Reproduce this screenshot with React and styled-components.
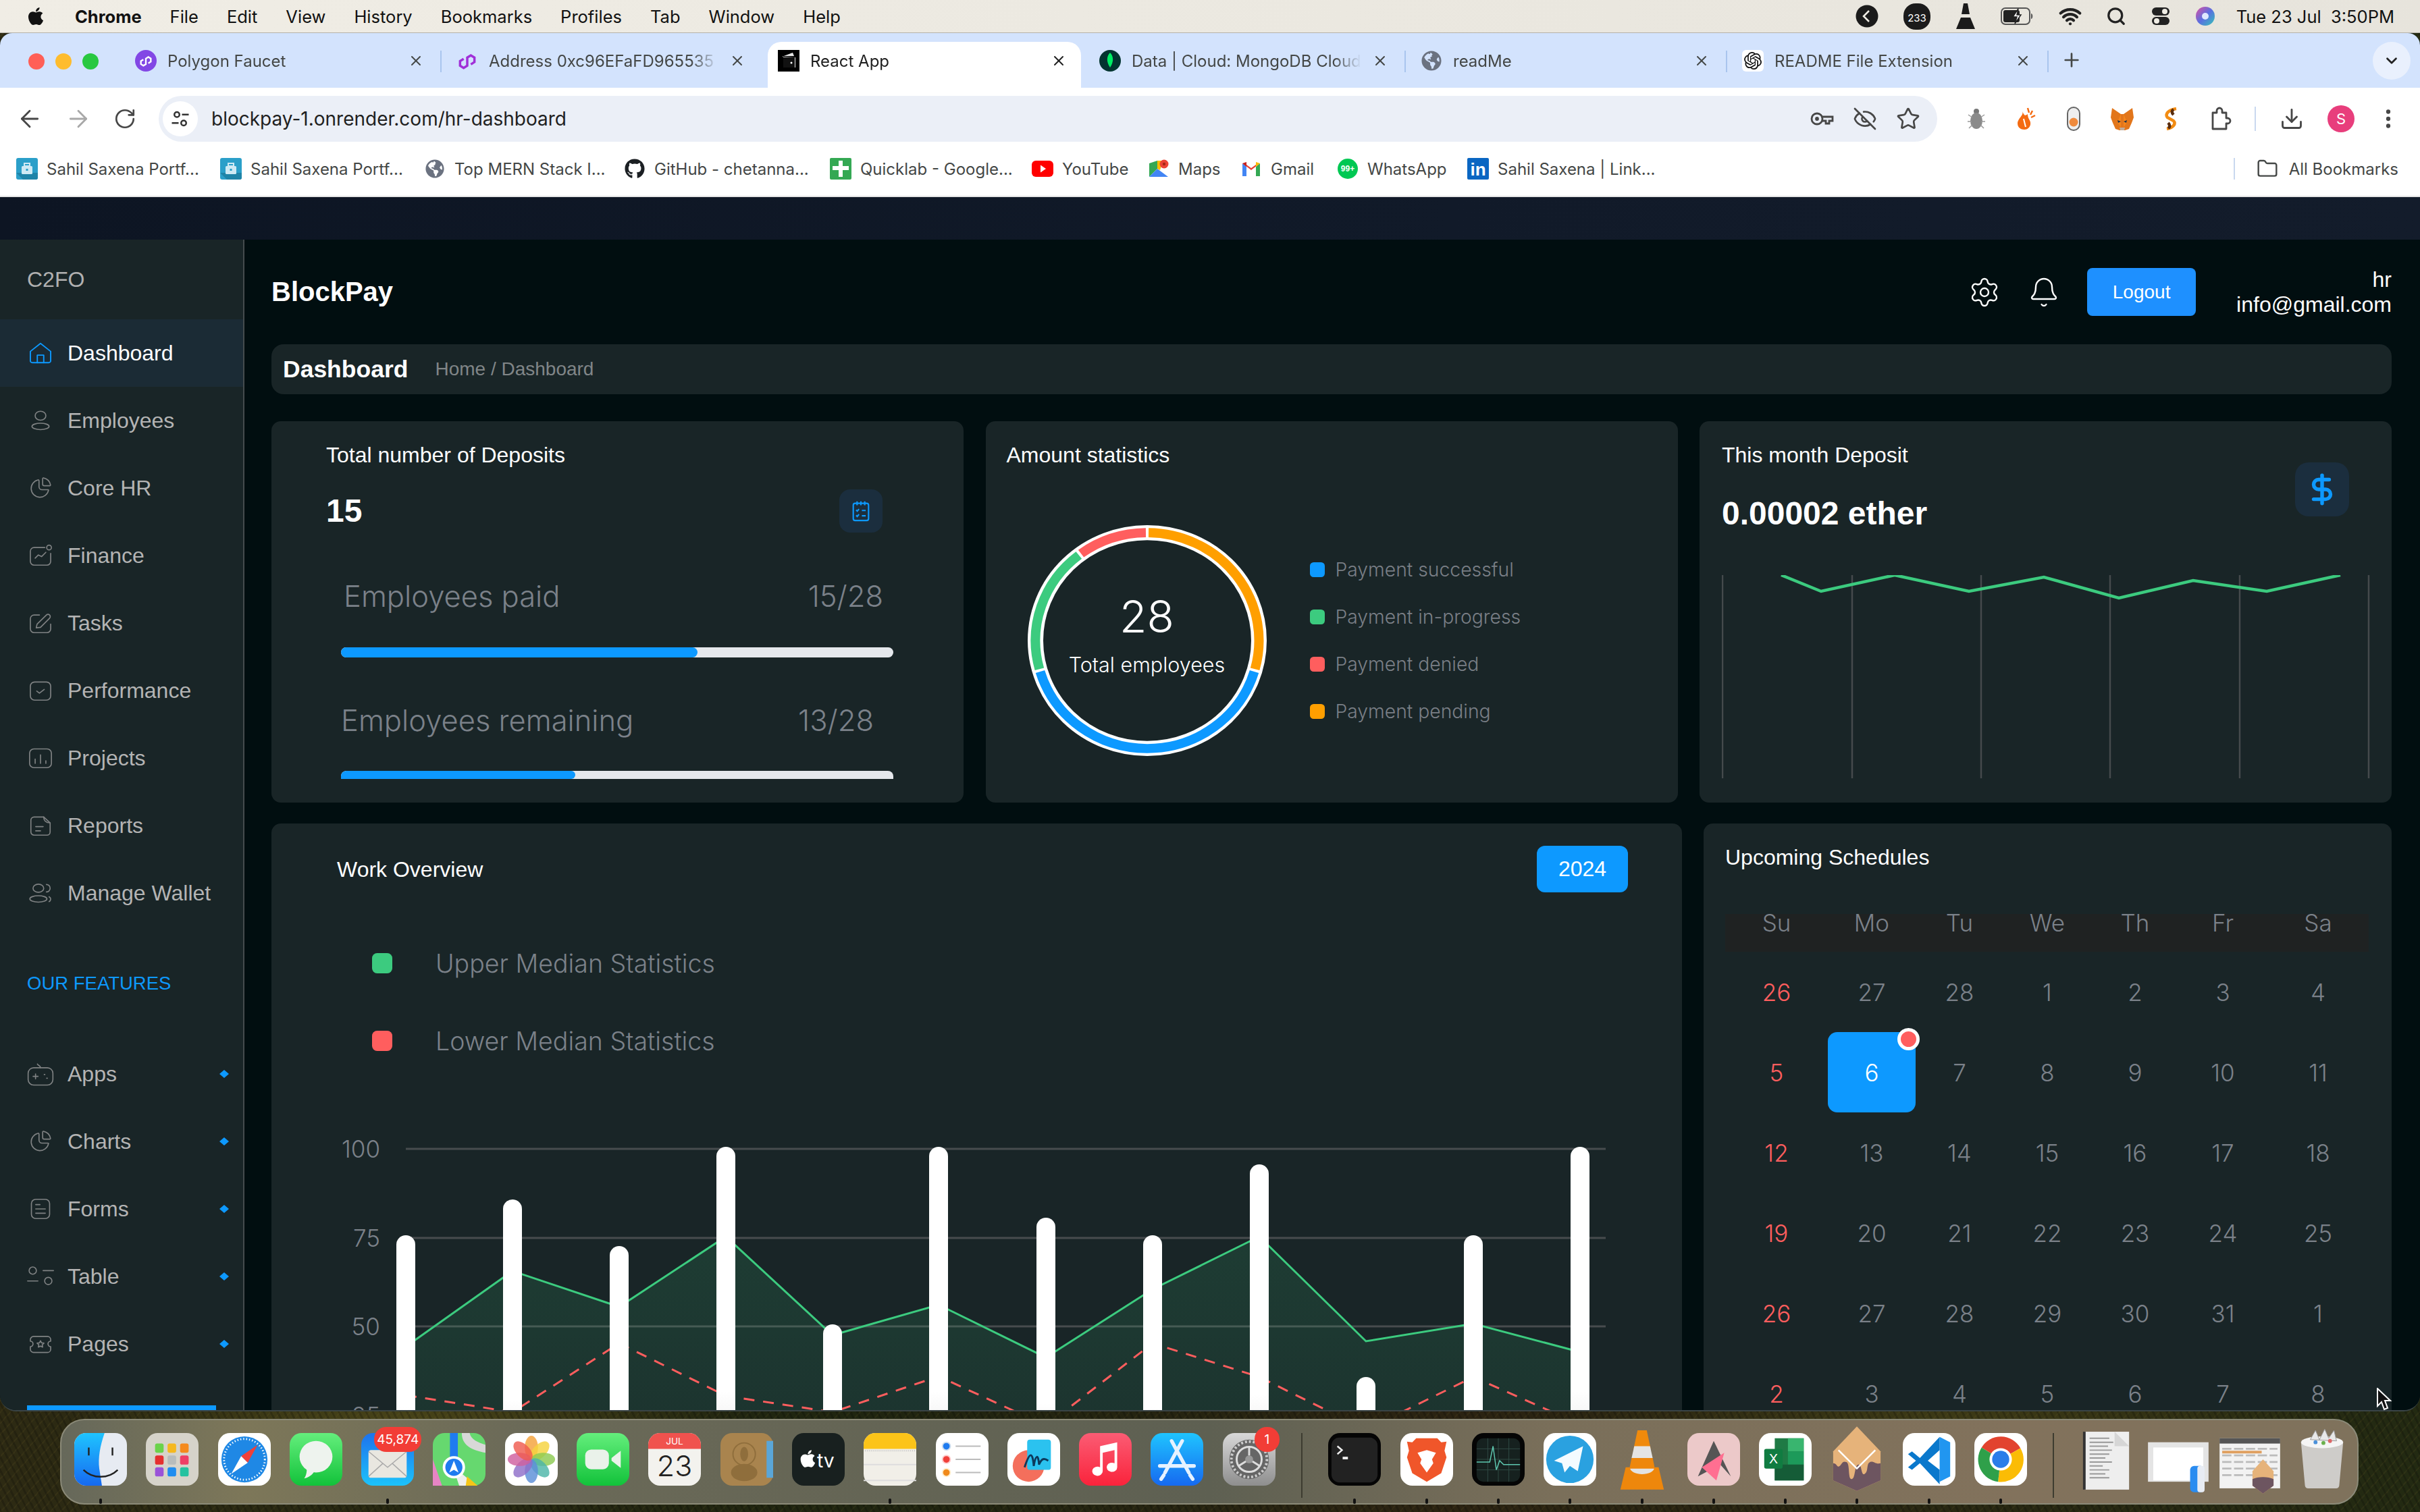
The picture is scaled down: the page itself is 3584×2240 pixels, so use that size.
import React from 'react';
import styled, { createGlobalStyle } from 'styled-components';
import { FaApple, FaGithub, FaGlobeAmericas } from 'react-icons/fa';
import { SiOpenai } from 'react-icons/si';
import {
  ArrowLeft, ArrowRight, RotateCw, X, Plus, ChevronDown, EyeOff, Star,
  Download, EllipsisVertical, Folder, Settings, Bell, DollarSign, Search, Wifi,
} from 'lucide-react';

const SANS = '"Liberation Sans", Arial, sans-serif';
const UI = '"Inter", "Liberation Sans", sans-serif';
const SOFT = '"Inter", "Liberation Sans", sans-serif';
const BLUE = '#0d99ff';
const GREEN = '#3ccb7f';
const RED = '#ff5e5e';
const ORANGE = '#ff9f00';
const CARD = '#192527';
const MUTED = '#7b8189';

const GlobalStyle = createGlobalStyle`
  html, body { margin: 0; padding: 0; background: #26250f; }
  * { box-sizing: border-box; }
`;

const Screen = styled.div`
  position: relative;
  width: 3584px;
  height: 2240px;
  overflow: hidden;
  font-family: ${SANS};
  background:
    repeating-linear-gradient(63deg, rgba(0, 0, 0, 0.18) 0 3px, transparent 3px 9px),
    repeating-linear-gradient(-48deg, rgba(120, 100, 40, 0.12) 0 2px, transparent 2px 11px),
    radial-gradient(ellipse 500px 120px at 600px 2110px, #4a4519 0%, transparent 100%),
    radial-gradient(ellipse 600px 140px at 2900px 2100px, #3d3a16 0%, transparent 100%),
    linear-gradient(90deg, #2d2a13 0%, #1f2510 35%, #2b2312 60%, #232a12 100%);
`;

/* menu bar */
const MenuBar = styled.div`
  height: 49px;
  display: flex;
  align-items: center;
  padding-left: 38px;
  background: linear-gradient(90deg, #f0ede5, #e7e4dc);
  border-bottom: 1px solid #b5b2aa;
  font-family: ${UI};
  font-size: 25.5px;
  color: #111;
`;
const MenuItems = styled.div`
  display: flex;
  align-items: center;
  gap: 42px;
  margin-left: 43px;
`;
const MenuApp = styled.span`
  font-weight: 700;
`;
const StatusIcons = styled.div`
  margin-left: auto;
  display: flex;
  align-items: center;
  gap: 36px;
  padding-right: 38px;
`;
const Clock = styled.span`
  margin-left: -5px;
  white-space: nowrap;
`;

/* browser */
const Win = styled.div`
  height: 2042px;
  display: flex;
  flex-direction: column;
  overflow: hidden;
  border-radius: 18px 18px 24px 24px;
  background: #010e10;
  border-bottom: 2px solid #3a4446;
`;
const TabStrip = styled.div`
  height: 81px;
  flex: none;
  display: flex;
  padding-top: 13px;
  background: #d3e3fd;
  font-family: ${UI};
  font-size: 24px;
  color: #444746;
`;
const Lights = styled.div`
  width: 178px;
  flex: none;
  display: flex;
  gap: 16px;
  padding: 17px 0 0 42px;
`;
const Light = styled.i`
  width: 24px;
  height: 24px;
  border-radius: 50%;
  background: ${(p) => p.$c};
`;
const Tab = styled.div`
  position: relative;
  width: 474px;
  height: 68px;
  flex: none;
  display: flex;
  align-items: center;
  gap: 16px;
  padding: 0 24px 12px 22px;
  color: ${(p) => (p.$active ? '#1f1f1f' : '#444746')};
  &::before {
    content: '';
    position: absolute;
    inset: 0 3px 0 7px;
    background: ${(p) => (p.$active ? '#fff' : 'transparent')};
    border-radius: 20px 20px 0 0;
  }
  & > * { position: relative; }
`;
const TabTitle = styled.span`
  flex: 1;
  overflow: hidden;
  white-space: nowrap;
  -webkit-mask-image: linear-gradient(90deg, #000 88%, transparent);
`;
const Fav = styled.span`
  flex: none;
  width: 32px;
  height: 32px;
  display: flex;
  align-items: center;
  justify-content: center;
  border-radius: ${(p) => p.$r || 0};
  background: ${(p) => p.$bg || 'transparent'};
  color: ${(p) => p.$c || '#fff'};
`;
const TabSep = styled.i`
  flex: none;
  width: 2px;
  height: 32px;
  margin-top: 13px;
  background: ${(p) => (p.$off ? 'transparent' : '#a9c5ee')};
`;
const NewTab = styled.div`
  margin: 11px 0 0 18px;
  height: 32px;
  display: flex;
`;
const TabMenu = styled.div`
  margin-left: auto;
  margin-right: 14px;
  width: 56px;
  height: 56px;
  border-radius: 50%;
  background: #e9f0fd;
  display: flex;
  align-items: center;
  justify-content: center;
`;
const Toolbar = styled.div`
  height: 82px;
  flex: none;
  display: flex;
  align-items: flex-start;
  padding: 12px 0 0 24px;
  background: #fff;
  color: #474747;
`;
const NavBtns = styled.div`
  display: flex;
  gap: 32px;
  height: 68px;
  align-items: center;
`;
const Address = styled.div`
  width: 2634px;
  height: 68px;
  margin-left: 33px;
  display: flex;
  align-items: center;
  padding: 0 25px 0 6px;
  border-radius: 34px;
  background: #ebeff7;
`;
const SiteChip = styled.span`
  width: 52px;
  height: 52px;
  border-radius: 50%;
  background: #fff;
  display: flex;
  align-items: center;
  justify-content: center;
`;
const Url = styled.span`
  margin-left: 20px;
  font-family: ${UI};
  font-size: 28px;
  color: #1f1f1f;
`;
const AddrActions = styled.div`
  margin-left: auto;
  display: flex;
  gap: 28px;
`;
const Exts = styled.div`
  display: flex;
  align-items: center;
  height: 68px;
  margin-left: 40px;
  gap: 36px;
`;
const ToolSep = styled.i`
  width: 2px;
  height: 36px;
  background: #c9d8ef;
  margin-left: ${(p) => p.$ml || 0}px;
`;
const ToolEnd = styled.div`
  display: flex;
  align-items: center;
  height: 68px;
  margin-left: ${(p) => p.$ml}px;
`;
const Avatar = styled.span`
  width: 40px;
  height: 40px;
  border-radius: 50%;
  background: #e83e7c;
  color: #fff;
  font-family: ${UI};
  font-size: 22px;
  display: flex;
  align-items: center;
  justify-content: center;
`;
const Bookmarks = styled.div`
  height: 80px;
  flex: none;
  display: flex;
  align-items: center;
  padding: 0 32px 2px 24px;
  background: #fff;
  border-bottom: 2px solid #e6e6e6;
  font-family: ${UI};
  font-size: 24px;
  color: #444746;
`;
const Mark = styled.div`
  width: ${(p) => p.$w}px;
  flex: none;
  display: flex;
  align-items: center;
  gap: 13px;
  white-space: nowrap;
`;
const AllMarks = styled.div`
  margin-left: auto;
  display: flex;
  align-items: center;
  gap: 16px;
`;
const MarkSep = styled.i`
  width: 2px;
  height: 32px;
  background: #c9d8ef;
  margin-right: 16px;
`;

/* app */
const Band = styled.div`
  height: 63px;
  flex: none;
  background: linear-gradient(90deg, #0d1523, #111a29 60%, #131c2b);
`;
const Dash = styled.div`
  flex: 1;
  min-height: 0;
  display: flex;
`;
const Sidebar = styled.aside`
  width: 362px;
  flex: none;
  background: ${CARD};
  border-right: 2px solid #454c4e;
  overflow: hidden;
`;
const Brand = styled.div`
  height: 118px;
  padding: 0 0 0 40px;
  display: flex;
  align-items: center;
  font-size: 32px;
  color: #b0b0b0;
`;
const NavRow = styled.div`
  position: relative;
  height: 100px;
  display: flex;
  align-items: center;
  gap: 24px;
  padding: 0 21px 0 44px;
  font-size: 32px;
  color: ${(p) => (p.$active ? '#fff' : '#b4b4b4')};
  background: ${(p) => (p.$active ? '#1b2b35' : 'transparent')};
`;
const NavIcon = styled.span`
  flex: 0 0 32px;
  min-width: 0;
  width: 32px;
  height: 32px;
  display: flex;
  align-items: center;
  justify-content: center;
  color: ${(p) => (p.$active ? BLUE : '#7f8283')};
`;
const Diamond = styled.i`
  margin-left: auto;
  width: 14px;
  height: 12px;
  background: ${BLUE};
  clip-path: polygon(50% 0, 100% 50%, 50% 100%, 0 50%);
`;
const SideLabel = styled.div`
  height: 168px;
  padding-left: 40px;
  display: flex;
  align-items: center;
  font-size: 27.5px;
  color: ${BLUE};
`;
const SideBar2 = styled.div`
  margin: 41px 0 0 40px;
  width: 280px;
  height: 40px;
  background: ${BLUE};
`;
const Main = styled.main`
  flex: 1;
  min-width: 0;
  padding: 0 42px 0 40px;
  background: #010e10;
  overflow: hidden;
`;
const Header = styled.header`
  height: 155px;
  display: flex;
  align-items: center;
  color: #fff;
`;
const Logo = styled.div`
  font-size: 40px;
  font-weight: 700;
`;
const HeadActions = styled.div`
  margin-left: auto;
  display: flex;
  align-items: center;
  gap: 40px;
`;
const LogoutBtn = styled.button`
  width: 161px;
  height: 71px;
  border: 0;
  border-radius: 8px;
  background: #1e90ff;
  color: #fff;
  font-family: ${SANS};
  font-size: 28px;
`;
const UserBox = styled.div`
  margin-left: 60px;
  text-align: right;
  font-size: 32px;
  line-height: 37px;
`;
const TitleBar = styled.div`
  height: 74px;
  display: flex;
  align-items: center;
  gap: 40px;
  padding-left: 17px;
  border-radius: 18px;
  background: ${CARD};
`;
const PageTitle = styled.h1`
  margin: 0;
  font-size: 35.5px;
  color: #fff;
`;
const Crumb = styled.span`
  font-size: 28px;
  color: #808587;
`;
const TopRow = styled.div`
  margin-top: 40px;
  height: 565px;
  display: grid;
  grid-template-columns: 1025px 1025px 1025px;
  column-gap: 32.5px;
`;
const BottomRow = styled.div`
  margin-top: 31px;
  display: grid;
  grid-template-columns: 2089px 1019px;
  column-gap: 32px;
`;
const Card = styled.section`
  position: relative;
  background: ${CARD};
  border-radius: 14px;
  min-height: 565px;
`;
const CardTitle = styled.h3`
  margin: 0;
  font-size: 32px;
  line-height: 38px;
  font-weight: 400;
  color: #fff;
`;
const DepositHead = styled.div`
  padding: 31px 120px 0 81px;
`;
const StatRow = styled.div`
  margin-top: 32px;
  height: 64px;
  display: flex;
  align-items: center;
  justify-content: space-between;
`;
const BigValue = styled.div`
  font-size: 48px;
  line-height: 56px;
  font-weight: 700;
  color: #fff;
`;
const IconTile = styled.div`
  flex: none;
  width: ${(p) => p.$size}px;
  height: ${(p) => p.$size}px;
  border-radius: ${(p) => p.$size / 4}px;
  background: #1b2e3e;
  color: ${BLUE};
  display: flex;
  align-items: center;
  justify-content: center;
`;
const Bars = styled.div`
  padding: 0 104px 0 103px;
`;
const BarLabel = styled.div`
  height: 60px;
  margin-top: ${(p) => p.$mt}px;
  padding: 0 ${(p) => p.$pr}px 0 ${(p) => p.$pl}px;
  display: flex;
  align-items: center;
  justify-content: space-between;
  font-family: ${SOFT};
  font-weight: 300;
  font-size: 43.5px;
  color: ${MUTED};
`;
const Track = styled.div`
  height: ${(p) => p.$h}px;
  margin-top: ${(p) => p.$mt}px;
  border-radius: ${(p) => (p.$cut ? '8px 8px 0 0' : '8px')};
  background: #e5e8ec;
  overflow: hidden;
`;
const Fill = styled.div`
  height: 100%;
  border-radius: 0 8px 8px 0;
  background: ${BLUE};
`;
const StatsTitle = styled(CardTitle)`
  padding: 31px 0 0 31px;
`;
const StatsBody = styled.div`
  margin-top: 85px;
  padding-left: 62px;
  display: flex;
`;
const Donut = styled.div`
  position: relative;
  width: 354px;
  height: 342px;
  flex: none;
`;
const DonutText = styled.div`
  position: absolute;
  inset: 0;
  padding-bottom: 14px;
  display: flex;
  flex-direction: column;
  align-items: center;
  justify-content: center;
  gap: 15px;
  color: #fff;
  font-family: ${SOFT};
  font-weight: 300;
`;
const DonutNum = styled.div`
  font-size: 66px;
  line-height: 70px;
`;
const DonutSub = styled.div`
  font-size: 30.5px;
  line-height: 44px;
`;
const Legend = styled.div`
  margin: 51px 0 0 64px;
  display: flex;
  flex-direction: column;
  gap: 40px;
`;
const LegendItem = styled.div`
  height: 30px;
  display: flex;
  align-items: center;
  gap: 16px;
  font-family: ${SOFT};
  font-weight: 300;
  font-size: 28.3px;
  color: #7a7f86;
`;
const Swatch = styled.i`
  flex: none;
  width: ${(p) => p.$size}px;
  height: ${(p) => p.$size}px;
  border-radius: ${(p) => p.$size / 4}px;
  background: ${(p) => p.$c};
`;
const DepositTop = styled.div`
  display: flex;
  justify-content: space-between;
  align-items: flex-start;
  padding: 31px 63px 0 33px;
`;
const DepositValue = styled(BigValue)`
  margin-top: 40px;
`;
const TileWrap = styled.div`
  margin-top: 30px;
`;
const SparkBox = styled.div`
  margin: 63px 0 0 33px;
  line-height: 0;
`;
const WorkHead = styled.div`
  display: flex;
  align-items: center;
  justify-content: space-between;
  padding: 33px 80px 0 97px;
`;
const YearBtn = styled.button`
  width: 135px;
  height: 69px;
  border: 0;
  border-radius: 12px;
  background: ${BLUE};
  color: #fff;
  font-family: ${SANS};
  font-size: 32px;
`;
const WorkLegend = styled.div`
  margin-top: 90px;
  padding-left: 149px;
  display: flex;
  flex-direction: column;
  gap: 85px;
`;
const WorkLegendItem = styled.div`
  height: 30px;
  display: flex;
  align-items: center;
  gap: 64px;
  font-family: ${SOFT};
  font-weight: 300;
  font-size: 37.5px;
  color: ${MUTED};
`;
const ChartBox = styled.div`
  margin-top: 123px;
  line-height: 0;
`;
const ScheduleTitle = styled(CardTitle)`
  padding: 31px 0 0 32px;
`;
const CalHead = styled.div`
  margin: 65px 34px 0 32px;
  height: 56px;
  display: grid;
  grid-template-columns: 152px repeat(5, 130px) 152px;
  background: #1f2222;
`;
const CalGrid = styled.div`
  margin: 0 34px 0 32px;
  display: grid;
  grid-template-columns: 152px repeat(5, 130px) 152px;
  grid-auto-rows: 119px;
`;
const DayName = styled.div`
  text-align: center;
  font-family: ${SOFT};
  font-weight: 300;
  font-size: 35px;
  line-height: 26px;
  color: ${MUTED};
`;
const DayCell = styled.div`
  position: relative;
  display: flex;
  align-items: center;
  justify-content: center;
  font-family: ${SOFT};
  font-weight: 300;
  font-size: 35px;
  border-radius: 14px;
  color: ${(p) => (p.$today ? '#fff' : p.$sun ? RED : MUTED)};
  background: ${(p) => (p.$today ? BLUE : 'transparent')};
`;
const TodayDot = styled.i`
  position: absolute;
  top: -6px;
  right: -6px;
  width: 33px;
  height: 33px;
  border-radius: 50%;
  background: ${RED};
  border: 5px solid #fff;
`;
const Cursor = styled.svg`
  position: absolute;
  left: 3519px;
  top: 2056px;
`;

/* dock */
const Dock = styled.div`
  position: absolute;
  left: 89px;
  top: 2102px;
  width: 3404px;
  height: 127px;
  display: flex;
  gap: 28.3px;
  padding: 19px 0 0 19px;
  border-radius: 36px;
  border: 2px solid #8b8a78;
  background: linear-gradient(90deg, #66685a 0%, #7d7759 8%, #6b6a58 20%, #5e6052 50%, #7a6f5a 65%, #82725c 85%, #7f725c 100%);
`;
const DockItem = styled.div`
  position: relative;
  flex: none;
  width: 78px;
  height: 106px;
`;
const DockDot = styled.i`
  position: absolute;
  left: 37px;
  top: 97px;
  width: 4px;
  height: 8px;
  border-radius: 2px;
  background: #111;
`;
const DockBadge = styled.span`
  position: absolute;
  top: -9px;
  height: 37px;
  left: ${(p) => p.$l}px;
  width: ${(p) => p.$w}px;
  border-radius: 18px;
  background: #f23d36;
  color: #fff;
  font-family: ${UI};
  font-size: 19px;
  display: flex;
  align-items: center;
  justify-content: center;
`;
const DockSep = styled.i`
  flex: none;
  width: 2px;
  height: 96px;
  margin: 0 10px;
  background: #3d3c30;
`;

/* small browser glyphs */
const PolyMark = ({ c, size = 24 }) => (
  <svg viewBox="0 0 24 24" width={size} height={size} fill="none" stroke={c} strokeWidth="2.6">
    <path d="M8 10l-4 2.4v5L8 20l4-2.5v-9L16 6l4 2.4v5L16 16" />
  </svg>
);
const Wallet = () => (
  <svg viewBox="0 0 32 32" width="32" height="32">
    <rect width="32" height="32" fill="#000" />
    <path d="M6 10l16-6 2 5H8v17h18V11" fill="#fff" opacity=".9" />
    <rect x="8" y="11" width="17" height="15" fill="#111" />
    <circle cx="20" cy="19" r="1.5" fill="#fff" />
  </svg>
);
const Leaf = () => (
  <svg viewBox="0 0 32 32" width="32" height="32">
    <circle cx="16" cy="16" r="16" fill="#023430" />
    <path d="M16 4c5 5 6 13 0 22-6-9-5-17 0-22z" fill="#00ed64" />
  </svg>
);
const Briefcase = () => (
  <svg viewBox="0 0 32 32" width="32" height="32">
    <rect width="32" height="32" rx="3" fill="#2b9fc9" />
    <path d="M0 22l10 10h19a3 3 0 0 0 3-3v-7z" fill="#1f84a8" />
    <rect x="8" y="12" width="16" height="12" rx="1.5" fill="#cfeaf4" />
    <rect x="12" y="8" width="8" height="4" fill="none" stroke="#cfeaf4" strokeWidth="2" />
    <rect x="14.5" y="16" width="3" height="3" fill="#2b9fc9" />
  </svg>
);
const QuickLab = () => (
  <svg viewBox="0 0 32 32" width="32" height="32">
    <rect width="32" height="32" rx="2" fill="#34a853" />
    <path d="M13 4h6v8h9v6h-9v10h-6V18H4v-6h9z" fill="#fff" />
  </svg>
);
const Yt = () => (
  <svg viewBox="0 0 32 32" width="32" height="32">
    <rect y="4" width="32" height="24" rx="6" fill="#f00" />
    <path d="M13 10.5l8 5.5-8 5.5z" fill="#fff" />
  </svg>
);
const MapsPin = () => (
  <svg viewBox="0 0 32 32" width="32" height="32">
    <path d="M2 8l12-4v12L2 28z" fill="#34a853" />
    <path d="M2 28l12-12 16 12z" fill="#4285f4" />
    <path d="M14 4h8l-4 14-4-2z" fill="#fbbc04" />
    <circle cx="24" cy="9" r="6.5" fill="#ea4335" />
    <circle cx="24" cy="9" r="2.2" fill="#a52714" />
  </svg>
);
const Gmail = () => (
  <svg viewBox="0 0 32 32" width="32" height="32">
    <path d="M3 8v19h6V13z" fill="#4285f4" />
    <path d="M23 13v14h6V8z" fill="#34a853" />
    <path d="M3 8l13 10L29 8l-6 2-7 5-7-5z" fill="#ea4335" />
    <path d="M23 6l6 2-6 5z" fill="#fbbc04" />
    <path d="M3 8l6-2v7z" fill="#c5221f" />
  </svg>
);
const Wa = () => (
  <svg viewBox="0 0 32 32" width="32" height="32">
    <circle cx="16" cy="16" r="15" fill="#00c853" />
    <text x="16" y="20" textAnchor="middle" fontSize="12" fontWeight="700" fill="#fff" fontFamily={SANS}>99+</text>
  </svg>
);
const LinkedIn = () => (
  <svg viewBox="0 0 32 32" width="32" height="32">
    <rect width="32" height="32" rx="2" fill="#0a66c2" />
    <text x="16" y="26" textAnchor="middle" fontSize="26" fontWeight="700" fill="#fff" fontFamily={SANS}>in</text>
  </svg>
);
const SiteTune = () => (
  <svg viewBox="0 0 24 24" width="30" height="30" fill="none" stroke="#333" strokeWidth="2">
    <circle cx="8" cy="7" r="3" />
    <path d="M14 7h8M2 17h8" />
    <circle cx="16" cy="17" r="3" />
  </svg>
);
const PassKey = () => (
  <svg viewBox="0 0 36 36" width="36" height="36" fill="none" stroke="currentColor" strokeWidth="2.8">
    <circle cx="11" cy="18" r="8" />
    <circle cx="11" cy="18" r="1.5" />
    <path d="M19 15h15v6h-5v4h-5v-4h-5" />
  </svg>
);
const ExtPuzzle = () => (
  <svg viewBox="0 0 36 36" width="36" height="36" fill="none" stroke="currentColor" strokeWidth="2.8" strokeLinejoin="round">
    <path d="M8 9h6V6a4 4 0 0 1 8 0v3h6v8h2a4 4 0 0 1 0 8h-2v8H8z" />
  </svg>
);
const BugExt = () => (
  <svg viewBox="0 0 36 36" width="36" height="36">
    <circle cx="18" cy="7" r="4" fill="#777" />
    <ellipse cx="18" cy="21" rx="9" ry="12" fill="#8a8a8a" />
    <path d="M6 12l6 4M30 12l-6 4M5 22h6M31 22h-6M7 32l5-5M29 32l-5-5" stroke="#999" strokeWidth="1.5" />
  </svg>
);
const FlameExt = () => (
  <svg viewBox="0 0 36 36" width="36" height="36">
    <path d="M14 6c3 7-7 11-7 19 0 6 5 9 10 9 6 0 10-5 9-11-1-4-4-6-4-12-3 2-5 4-8-5z" fill="#f46b12" />
    <path d="M22 2l2 7M29 6l-3 6M33 13l-6 3" stroke="#f46b12" strokeWidth="2.5" />
    <path d="M16 18l3 12" stroke="#fff" strokeWidth="2" />
  </svg>
);
const PillExt = () => (
  <svg viewBox="0 0 36 36" width="36" height="36">
    <rect x="9" y="1" width="18" height="34" rx="9" fill="#eee" stroke="#666" strokeWidth="2" />
    <circle cx="18" cy="23" r="6.5" fill="#ef8a3c" />
  </svg>
);
const FoxExt = () => (
  <svg viewBox="0 0 36 36" width="36" height="36">
    <path d="M3 2l13 9h4L33 2l2 14-3 8-4 9-6 2h-8l-6-2-4-9-3-8z" fill="#e2761b" />
    <path d="M16 11l-5 12 5 8zM20 11l5 12-5 8z" fill="#f6851b" />
    <path d="M14 31h8l-1 4h-6z" fill="#c0ad9e" />
    <path d="M11 20l5 2-4 2zM25 20l-5 2 4 2z" fill="#233447" />
  </svg>
);
const SExt = () => (
  <svg viewBox="0 0 36 36" width="36" height="36" fill="none" strokeWidth="4.5">
    <path d="M26 3C14 5 9 11 13 16l9 5c4 4 0 10-10 12" stroke="#f28c13" />
    <path d="M22 12c-3-3-3-6 0-8M14 24c3 3 3 6 0 8" stroke="#5b2d0e" />
  </svg>
);
const ApplePlay = () => (
  <svg viewBox="0 0 36 36" width="36" height="36">
    <circle cx="18" cy="18" r="16.5" fill="#1b1b1b" />
    <path d="M21 10l-8 8 8 8" fill="none" stroke="#f0ede5" strokeWidth="2.5" />
  </svg>
);
const Badge233 = () => (
  <svg viewBox="0 0 40 40" width="40" height="40">
    <rect y="1" width="40" height="39" rx="18" fill="#1b1b1b" />
    <text x="20" y="28" textAnchor="middle" fontSize="15" fill="#fff" fontFamily={UI}>233</text>
  </svg>
);
const MiniCone = () => (
  <svg viewBox="0 0 32 40" width="32" height="40">
    <path d="M13 1h6l3 16h-12z" fill="#1b1b1b" />
    <path d="M9 22h14l7 17H2z" fill="#1b1b1b" />
  </svg>
);
const Battery = () => (
  <svg viewBox="0 0 50 28" width="50" height="28">
    <rect x="1" y="2" width="42" height="24" rx="6" fill="none" stroke="#555" strokeWidth="2" />
    <rect x="4" y="5" width="24" height="18" rx="3" fill="#222" />
    <path d="M45 10c3 0 3 8 0 8z" fill="#555" />
    <path d="M26 3l-8 12h6l-3 10 9-13h-6z" fill="#fff" stroke="#222" strokeWidth="1.5" />
  </svg>
);
const Control = () => (
  <svg viewBox="0 0 30 30" width="30" height="30">
    <rect x="2" y="2" width="26" height="12" rx="6" fill="#222" />
    <circle cx="21" cy="8" r="4" fill="#f0ede5" />
    <rect x="2" y="16" width="26" height="12" rx="6" fill="#222" />
    <circle cx="9" cy="22" r="4" fill="#f0ede5" />
  </svg>
);
const Siri = () => (
  <svg viewBox="0 0 30 30" width="30" height="30">
    <defs>
      <linearGradient id="siriG" x1="0" y1="0" x2="1" y2="1">
        <stop offset="0" stopColor="#e14fa0" />
        <stop offset=".5" stopColor="#5a6fe0" />
        <stop offset="1" stopColor="#33c6b8" />
      </linearGradient>
    </defs>
    <circle cx="15" cy="15" r="14" fill="url(#siriG)" />
    <circle cx="15" cy="15" r="5" fill="#dfe8ff" />
  </svg>
);

/* sidebar icons */
const Line = ({ children, size = 38, view = '0 0 24 24', sw = 1.05 }) => (
  <svg viewBox={view} width={size} height={size} fill="none" stroke="currentColor" strokeWidth={sw} strokeLinecap="round" strokeLinejoin="round" style={{ flex: 'none' }}>
    {children}
  </svg>
);
const PieShape = () => (
  <>
    <path d="M19.5 14a8.2 8.2 0 1 1-9.8-9.6c.6-.1.9.3.9 1v5.4c0 1.6 1.2 2.8 2.8 2.8h5.4c.6 0 .8.2.7.4z" />
    <path d="M14 3.2c0-.5.4-.8 1-.6a8.3 8.3 0 0 1 6.3 6.3c.1.6-.2 1-.7 1H15.5A1.5 1.5 0 0 1 14 8.4z" />
  </>
);
const sideIcons = {
  home: <Line sw={1.2}><path d="M2.5 10.5 12 3l9.5 7.5v8.7a1.8 1.8 0 0 1-1.8 1.8H4.3a1.8 1.8 0 0 1-1.8-1.8z" /><path d="M9 21v-7h6v7" /></Line>,
  user: <Line><ellipse cx="12" cy="7.5" rx="5" ry="4.2" /><ellipse cx="12" cy="17.5" rx="8" ry="3" /></Line>,
  pie: <Line><PieShape /></Line>,
  finance: <Line><path d="M16 4.5H6a3.5 3.5 0 0 0-3.5 3.5v9.5A3.5 3.5 0 0 0 6 21h12a3.5 3.5 0 0 0 3.5-3.5V10" /><circle cx="20" cy="4.5" r="2.2" /><path d="M7 14.5l3-3 3 1.5 4-4" /></Line>,
  task: <Line><path d="M11 4.5H6A3.5 3.5 0 0 0 2.5 8v9.5A3.5 3.5 0 0 0 6 21h12a3.5 3.5 0 0 0 3.5-3.5V13" /><path d="M8 16.5l.8-3.5L17.5 4.5a2 2 0 0 1 3 3L12 16z" /></Line>,
  perf: <Line><rect x="2.5" y="4" width="19" height="17" rx="4" /><path d="M8.5 12.5l2.5 2 4.5-3.5" /></Line>,
  project: <Line><rect x="1.8" y="3.5" width="20.4" height="17.5" rx="4" /><path d="M7 13v4M12 9v8M17 14.5v2.5" /></Line>,
  report: <Line><path d="M6 4h9l6 5.5V18a3 3 0 0 1-3 3H6a3 3 0 0 1-3-3V7a3 3 0 0 1 3-3z" /><path d="M15 4c0 3 1.5 5.5 6 5.5M7.5 13h7M7.5 17h4.5" /></Line>,
  wallet: <Line><ellipse cx="10" cy="7.5" rx="5" ry="3.8" /><ellipse cx="10" cy="17.5" rx="8" ry="3" /><path d="M17.5 4a3.5 3.5 0 0 1 0 7M20 15.5c2 1 2 3.5 0 4.5" /></Line>,
  game: <Line size={44} sw={0.9}><rect x="2" y="7" width="20" height="14" rx="4.5" /><path d="M6 14h4M8 12v4M15 12.5h.5M17 15.5h.5M12 7c0-2-2-1.5-2.5-3" /></Line>,
  forms: <Line><rect x="3.5" y="3" width="17" height="18" rx="4" /><path d="M7.5 8h4M7.5 12h9M7.5 16h9" /></Line>,
  table: <Line size={46} sw={0.85}><circle cx="6" cy="7.5" r="2.8" /><path d="M14 7.5h8M2 15.5h8" /><circle cx="18" cy="15.5" r="2.8" /></Line>,
  pages: <Line><path d="M2.5 8a3 3 0 0 1 3-3h13a3 3 0 0 1 3 3v1.5a2.5 2.5 0 0 0 0 5V17a3 3 0 0 1-3 3h-13a3 3 0 0 1-3-3v-2.5a2.5 2.5 0 0 0 0-5z" /><path d="M12 9l1 2 2.2.3-1.6 1.5.4 2.2-2-1-2 1 .4-2.2-1.6-1.5L11 11z" /></Line>,
};

/* dock icons */
const Tile = ({ children, bg = '#fff', overflow }) => (
  <svg viewBox="0 0 80 80" width="78" height="78" style={{ overflow: overflow ? 'visible' : 'hidden' }}>
    {bg !== 'none' && <rect width="80" height="80" rx="18" fill={bg} />}
    {children}
  </svg>
);
const Defs = () => (
  <svg width="0" height="0" style={{ position: 'absolute' }}>
    <defs>
      <linearGradient id="gBlue" x1="0" y1="0" x2="0" y2="1"><stop offset="0" stopColor="#1fc4ff" /><stop offset="1" stopColor="#1669f0" /></linearGradient>
      <linearGradient id="gMail" x1="0" y1="0" x2="0" y2="1"><stop offset="0" stopColor="#1e72ec" /><stop offset="1" stopColor="#1cc3fb" /></linearGradient>
      <linearGradient id="gGreen" x1="0" y1="0" x2="0" y2="1"><stop offset="0" stopColor="#64ee7c" /><stop offset="1" stopColor="#12c23a" /></linearGradient>
      <linearGradient id="gRed" x1="0" y1="0" x2="0" y2="1"><stop offset="0" stopColor="#fb5c74" /><stop offset="1" stopColor="#fa233b" /></linearGradient>
      <linearGradient id="gGrey" x1="0" y1="0" x2="0" y2="1"><stop offset="0" stopColor="#d8d8d8" /><stop offset="1" stopColor="#8e8e8e" /></linearGradient>
      <linearGradient id="gArea" x1="0" y1="0" x2="0" y2="1"><stop offset="0" stopColor={GREEN} stopOpacity=".14" /><stop offset="1" stopColor={GREEN} stopOpacity=".09" /></linearGradient>
      <linearGradient id="gBar" x1="0" y1="0" x2="0" y2="1"><stop offset="0" stopColor="#fff" /><stop offset=".82" stopColor="#fff" /><stop offset="1" stopColor="#ececec" /></linearGradient>
    </defs>
  </svg>
);
const petals = ['#f4a23a', '#f5d33d', '#8ccb52', '#4db6a8', '#5b8fd8', '#8f6fc9', '#cf5f9f', '#ef5b4f'];
const lpColors = ['#6bd34a', '#f5b81f', '#f58a1c', '#e52f2f', '#b7bcbc', '#ef3f66', '#9a52d8', '#1f8df0', '#25c2a0'];
const Finder = () => (
  <Tile bg="#e7ebf2">
    <path d="M18 0h28c-7 20-10 38-8 54l4 26H18A18 18 0 0 1 0 62V18A18 18 0 0 1 18 0z" fill="url(#gBlue)" />
    <path d="M22 22v12M58 22v12" stroke="#222" strokeWidth="2.5" />
    <path d="M14 56c14 14 38 14 52 0" stroke="#222" strokeWidth="2.5" fill="none" />
  </Tile>
);
const dockIcons = [
  { id: 'finder', node: <Finder />, dot: true },
  { id: 'launch', node: <Tile bg="#d6d3ca">{lpColors.map((c, i) => <rect key={c} x={14 + (i % 3) * 19} y={16 + Math.floor(i / 3) * 18} width="13" height="14" rx="3" fill={c} />)}</Tile> },
  { id: 'safari', node: <Tile><circle cx="40" cy="40" r="35" fill="#1f88e5" /><circle cx="40" cy="40" r="31" fill="none" stroke="#fff" strokeWidth="3" strokeDasharray="1.5 3" /><path d="M60 18L45 45 35 35z" fill="#f0403a" /><path d="M20 62l15-27 10 10z" fill="#fff" /></Tile> },
  { id: 'msg', node: <Tile bg="url(#gGreen)"><ellipse cx="40" cy="36" rx="25" ry="24" fill="#eef3ee" /><path d="M26 54c0 8-2 12-4 15 6-1 12-5 15-10z" fill="#eef3ee" /></Tile> },
  { id: 'mail', dot: true, badge: { text: '45,874', l: 19, w: 70 }, node: <Tile bg="url(#gMail)"><rect x="11" y="26" width="58" height="42" rx="4" fill="#e9e7e0" /><path d="M11 28l29 24 29-24M11 66l22-20M69 66L47 46" stroke="#aaa" strokeWidth="1.5" fill="none" /></Tile> },
  { id: 'maps', node: <Tile bg="#66d86f"><path d="M0 40l14 40H0z" fill="#e784c4" /><path d="M26 0h12v36H26z" fill="#1f7bef" /><path d="M44 0c0 18 14 26 36 30v-12C68 14 58 10 56 0z" fill="#d8d8d8" /><path d="M30 50L66 80H40z" fill="#eee" /><path d="M52 66L68 80H50z" fill="#f5c518" /><circle cx="32" cy="52" r="17" fill="#fff" /><circle cx="32" cy="52" r="13" fill="#1f7bef" /><path d="M32 42l7 18-7-4-7 4z" fill="#fff" /></Tile> },
  { id: 'photos', node: <Tile>{petals.map((c, i) => <ellipse key={c} cx="40" cy="22" rx="10" ry="18" fill={c} opacity=".82" transform={`rotate(${i * 45} 40 40)`} />)}</Tile> },
  { id: 'ft', node: <Tile bg="url(#gGreen)"><rect x="13" y="25" width="36" height="30" rx="9" fill="#eaf2ea" /><path d="M53 38l14-11v26L53 42z" fill="#eaf2ea" /></Tile> },
  { id: 'cal', node: <Tile bg="#f3f2ee"><path d="M0 24V18A18 18 0 0 1 18 0h44a18 18 0 0 1 18 18v6z" fill="#f0524e" /><text x="40" y="17" textAnchor="middle" fontSize="14" fill="#fff" fontFamily={UI}>JUL</text><text x="40" y="66" textAnchor="middle" fontSize="44" fontWeight="300" fill="#222" fontFamily={UI}>23</text></Tile> },
  { id: 'contacts', node: <Tile bg="#a9844e"><path d="M70 12h10v56H70z" fill="#5aa6d8" /><circle cx="36" cy="32" r="17" fill="none" stroke="#8f6e3c" strokeWidth="2" /><ellipse cx="36" cy="32" rx="6" ry="11" fill="#8f6e3c" /><ellipse cx="36" cy="60" rx="20" ry="13" fill="#8f6e3c" /></Tile> },
  { id: 'tv', node: <Tile bg="#18201f"><FaApple x="9" y="24" size="30" color="#fff" /><text x="38" y="52" fontSize="29" fill="#fff" fontFamily={UI}>tv</text></Tile> },
  { id: 'notes', dot: true, node: <Tile bg="#f1efe8"><path d="M0 24V18A18 18 0 0 1 18 0h44a18 18 0 0 1 18 18v6z" fill="#fcc419" /><path d="M0 48h80M0 72h80" stroke="#ddd" strokeWidth="2" /><path d="M2 27h76" stroke="#bbb" strokeWidth="2" strokeDasharray="1 2" /></Tile> },
  { id: 'rem', node: <Tile><circle cx="16" cy="20" r="6" fill="#1f7bef" stroke="#cde" strokeWidth="2" /><circle cx="16" cy="40" r="6" fill="#f0403a" stroke="#fcc" strokeWidth="2" /><circle cx="16" cy="60" r="6" fill="#f08a1c" stroke="#fec" strokeWidth="2" /><path d="M30 20h38M30 40h38M30 60h38" stroke="#bbb" strokeWidth="2" /></Tile> },
  { id: 'free', node: <Tile><circle cx="32" cy="50" r="24" fill="#f46f5c" /><rect x="30" y="10" width="36" height="46" rx="4" fill="#2bc2ef" /><path d="M26 52c8-24 12-24 14-2 3-18 7-18 8-2 4-10 8-10 14-6" stroke="#0c3a5c" strokeWidth="3" fill="none" /></Tile> },
  { id: 'music', node: <Tile bg="url(#gRed)"><path d="M32 20l26-6v38a8 7 0 1 1-4-6V26l-18 4v28a8 7 0 1 1-4-6z" fill="#fff" /></Tile> },
  { id: 'store', node: <Tile bg="url(#gBlue)"><path d="M48 12L22 60M32 12l26 48M14 50h52M20 64l-4 6M60 64l4 6" stroke="#e6f2ff" strokeWidth="5.5" strokeLinecap="round" /></Tile> },
  { id: 'settings', badge: { text: '1', l: 47, w: 37 }, node: <Tile bg="url(#gGrey)"><circle cx="40" cy="40" r="30" fill="#666" /><circle cx="40" cy="40" r="27" fill="none" stroke="#ccc" strokeWidth="4" strokeDasharray="3 3" /><circle cx="40" cy="40" r="19" fill="none" stroke="#ddd" strokeWidth="3" /><circle cx="40" cy="40" r="6" fill="#999" /><path d="M40 34V21M45 43l11 7M35 43l-11 7" stroke="#ddd" strokeWidth="3" /></Tile> },
  { sep: true, id: 's1' },
  { id: 'term', dot: true, node: <Tile bg="#050505"><rect x="5" y="7" width="70" height="68" rx="12" fill="#222" /><path d="M14 20l7 6-7 6" stroke="#eee" strokeWidth="2.5" fill="none" /><rect x="22" y="36" width="8" height="4" fill="#eee" /></Tile> },
  { id: 'brave', dot: true, node: <Tile><path d="M24 8h32l6 6 8-1-3 14 3 10-8 24-22 13-22-13-8-24 3-10-3-14 8 1z" fill="#f0562a" /><path d="M26 30l14-4 14 4-6 10 2 6-10 14-10-14 2-6z" fill="#fff" /></Tile> },
  { id: 'activity', dot: true, node: <Tile bg="#050505"><rect x="7" y="8" width="66" height="66" rx="10" fill="#16211f" /><path d="M7 24h66M7 40h66M7 56h66M24 8v66M40 8v66M56 8v66" stroke="#2f4a44" strokeWidth="1" /><path d="M7 44h20l5-24 5 36 5-14 6 6h25" stroke="#5ec8b0" strokeWidth="1.5" fill="none" /></Tile> },
  { id: 'tg', dot: true, node: <Tile><circle cx="40" cy="40" r="36" fill="#2aa1e0" /><path d="M60 20L16 42l12 4 4 14 8-10 12 8z" fill="#f4fbff" /></Tile> },
  { id: 'vlc', dot: true, node: <Tile bg="none" overflow><path d="M33-4h14l6 28H27z" fill="#f08a0c" /><path d="M28 20h24l4 18H24z" fill="#e4e4e4" /><path d="M24 38h32l5 24H19z" fill="#ee870c" /><path d="M22 54h36l5 14H17z" fill="#e2e2e2" /><path d="M15 52h6c2 14 36 14 38 0h6l8 34H7z" fill="#ee870c" /></Tile> },
  { id: 'arc', dot: true, node: <Tile bg="#ecc9c9"><path d="M40 12L66 66 50 48 16 66z" fill="#555" /><path d="M56 30L44 72 22 52z" fill="#ff6f91" /></Tile> },
  { id: 'excel', dot: true, node: <Tile><path d="M24 8h44v64H24z" fill="#1f7a45" /><path d="M44 8h24v20H44z" fill="#39b56f" /><path d="M44 28h24v20H44z" fill="#1d9a5a" /><path d="M24 48h44v24H24z" fill="#155c37" /><rect x="8" y="24" width="28" height="30" rx="3" fill="#107c41" /><text x="22" y="46" textAnchor="middle" fontSize="20" fill="#fff" fontFamily={SANS}>X</text></Tile> },
  { id: 'envelope', dot: true, node: <Tile bg="none" overflow><path d="M40-10L76 28v44L40 88 4 72V28z" fill="#e6b37a" /><path d="M4 46c6 0 6 8 10 4s4-8 10-6 2 26 8 26 4-20 10-22 4 18 10 14 2-16 8-18 8 4 16 2v26L40 88 4 72z" fill="#6d5560" /><path d="M12 26l28 28 28-28" stroke="#fff" strokeWidth="2.5" fill="none" /></Tile> },
  { id: 'vscode', dot: true, node: <Tile><path d="M56 6l16 8v52l-16 8z" fill="#2196f0" /><path d="M56 6L26 38l-12-10-6 4 12 10-12 10 6 4 12-10 30 32V56L38 42l18-16z" fill="#0a78cc" /></Tile> },
  { id: 'chrome', dot: true, node: <Tile><path d="M40 40L11 22a34 34 0 0 1 59 1z" fill="#e2432f" /><path d="M40 40L70 23a34 34 0 0 1-34 51z" fill="#fbbc05" /><path d="M40 40l-4 34A34 34 0 0 1 11 22z" fill="#2fa04a" /><circle cx="40" cy="40" r="17" fill="#fff" /><circle cx="40" cy="40" r="13" fill="#2b7de9" /></Tile> },
  { sep: true, id: 's2' },
  { id: 'doc', node: <Tile bg="none" overflow><rect x="6" y="-2" width="68" height="88" fill="#eee" /><rect x="4" y="-2" width="4" height="88" fill="#333" /><path d="M14 8h30M14 14h36M14 20h28M14 26h34M14 32h30M14 38h24M14 44h34M14 50h20M14 56h30M14 62h24M14 68h30" stroke="#999" strokeWidth="2" /><path d="M52-2l22 22H52z" fill="#d6d6d6" /></Tile> },
  { id: 'window', node: <Tile bg="none" overflow><rect x="-6" y="14" width="92" height="60" fill="#e4e4e4" /><rect x="2" y="22" width="76" height="50" fill="#fff" /><rect x="58" y="50" width="22" height="40" rx="6" fill="#2a8cf0" /><rect x="69" y="50" width="11" height="40" rx="4" fill="#e8ecf3" /></Tile> },
  { id: 'stack', node: <Tile bg="none" overflow><rect x="-6" y="8" width="92" height="76" fill="#f2f2f2" /><rect x="-6" y="8" width="92" height="8" fill="#555" /><path d="M-2 24h84M-2 34h84M-2 44h84M-2 54h84M-2 64h84" stroke="#bbb" strokeWidth="3" strokeDasharray="14 4" /><path d="M-2 29h60" stroke="#e0a060" strokeWidth="4" /><path d="M60 40l16 18v22l-16 12-16-12V58z" fill="#e6b37a" /><path d="M44 70c8-4 24-4 32 0v10l-16 12-16-12z" fill="#6d5560" /></Tile> },
  { id: 'trash', node: <Tile bg="none" overflow><path d="M8 14h64l-6 66a5 5 0 0 1-5 4H19a5 5 0 0 1-5-4z" fill="#dcdcdc" opacity=".85" /><ellipse cx="40" cy="14" rx="32" ry="9" fill="#f5f5f5" /><path d="M22 10l8-14 6 14 8-16 6 14 8-12 4 16z" fill="#e8e8e8" stroke="#999" /><circle cx="30" cy="14" r="3" fill="#4a90d9" /><circle cx="42" cy="15" r="3" fill="#6ab04c" /><circle cx="52" cy="12" r="3" fill="#d66" /></Tile> },
];

const tabs = [
  { title: 'Polygon Faucet', fav: <Fav $bg="#8247e5" $r="50%"><PolyMark c="#fff" size={22} /></Fav> },
  { title: 'Address 0xc96EFaFD965535', fav: <Fav><PolyMark c="#a02fd8" size={32} /></Fav> },
  { title: 'React App', fav: <Fav><Wallet /></Fav>, active: true },
  { title: 'Data | Cloud: MongoDB Cloud', fav: <Fav><Leaf /></Fav> },
  { title: 'readMe', fav: <Fav $c="#6b7280"><FaGlobeAmericas size={30} /></Fav> },
  { title: 'README File Extension', fav: <Fav $bg="#fff" $r="6px" $c="#111"><SiOpenai size={26} /></Fav> },
];
const marks = [
  { t: 'Sahil Saxena Portf...', w: 302, i: <Briefcase /> },
  { t: 'Sahil Saxena Portf...', w: 302, i: <Briefcase /> },
  { t: 'Top MERN Stack I...', w: 296, i: <Fav $c="#6b7280"><FaGlobeAmericas size={28} /></Fav> },
  { t: 'GitHub - chetanna...', w: 305, i: <Fav $c="#1b1f23"><FaGithub size={30} /></Fav> },
  { t: 'Quicklab - Google...', w: 299, i: <QuickLab /> },
  { t: 'YouTube', w: 172, i: <Yt /> },
  { t: 'Maps', w: 137, i: <MapsPin /> },
  { t: 'Gmail', w: 143, i: <Gmail /> },
  { t: 'WhatsApp', w: 193, i: <Wa /> },
  { t: 'Sahil Saxena | Link...', w: 300, i: <LinkedIn /> },
];
const nav = [
  ['Dashboard', 'home'], ['Employees', 'user'], ['Core HR', 'pie'], ['Finance', 'finance'], ['Tasks', 'task'],
  ['Performance', 'perf'], ['Projects', 'project'], ['Reports', 'report'], ['Manage Wallet', 'wallet'],
];
const features = [['Apps', 'game'], ['Charts', 'pie'], ['Forms', 'forms'], ['Table', 'table'], ['Pages', 'pages']];
const days = ['Su', 'Mo', 'Tu', 'We', 'Th', 'Fr', 'Sa'];
const weeks = [
  [26, 27, 28, 1, 2, 3, 4], [5, 6, 7, 8, 9, 10, 11], [12, 13, 14, 15, 16, 17, 18],
  [19, 20, 21, 22, 23, 24, 25], [26, 27, 28, 29, 30, 31, 1], [2, 3, 4, 5, 6, 7, 8],
];

// donut is drawn in a 354x342 box, squashed a little like the reference
const polar = (deg, r) => {
  const a = ((deg - 90) * Math.PI) / 180;
  return [177 + r * Math.cos(a), 177 + r * Math.sin(a)];
};
const arc = (from, to, r) => {
  const [x1, y1] = polar(from, r);
  const [x2, y2] = polar(to, r);
  return `M${x1} ${y1}A${r} ${r} 0 ${to - from > 180 ? 1 : 0} 1 ${x2} ${y2}`;
};
const segments = [
  { from: 0.7, to: 105.3, c: ORANGE },
  { from: 106.7, to: 253.3, c: BLUE },
  { from: 254.7, to: 322.3, c: GREEN },
  { from: 323.7, to: 359.3, c: RED },
];
const DonutChart = () => (
  <svg viewBox="0 0 354 354" width="354" height="342" preserveAspectRatio="none">
    <circle cx="177" cy="177" r="165.5" fill="none" stroke="#fff" strokeWidth="23" />
    {segments.map((s) => <path key={s.c} d={arc(s.from, s.to, 165.5)} fill="none" stroke={s.c} strokeWidth="14" />)}
  </svg>
);

const sparkX = [0, 192, 383, 574, 766, 957];
const sparkPts = '88,0 147,24 256,0 366,24 477,3 588,34 698,8 807,24 916,0';
const SparkChart = () => (
  <svg viewBox="0 0 960 301" width="960" height="301">
    {sparkX.map((x) => <line key={x} x1={x + 1} x2={x + 1} y1="0" y2="301" stroke="#454a4c" strokeWidth="2.5" />)}
    <polyline points={sparkPts} fill="none" stroke={GREEN} strokeWidth="4.5" />
  </svg>
);

const barData = [[601, 1830], [759, 1777], [917, 1846], [1075, 1699], [1233, 1962], [1390, 1699], [1549, 1804], [1707, 1830], [1865, 1725], [2023, 2040], [2182, 1830], [2340, 1699]];
const upper = [[601, 1995], [759, 1883], [917, 1936], [1075, 1832], [1233, 1978], [1390, 1933], [1549, 2011], [1707, 1910], [1865, 1832], [2023, 1987], [2182, 1961], [2340, 2003]];
const lower = [[601, 2067], [759, 2092], [917, 1990], [1075, 2068], [1233, 2092], [1390, 2039], [1549, 2112], [1707, 1990], [1865, 2040], [2023, 2118], [2182, 2040], [2340, 2110]];
const axis = [[100, 1702], [75, 1834], [50, 1965], [25, 2097]];
const toPts = (list) => list.map((p) => p.join(',')).join(' ');
const WorkChart = () => (
  <svg viewBox="402 1680 2089 430" width="2089" height="430" style={{ fontFamily: SOFT }}>
    {axis.map(([label, y]) => (
      <g key={label}>
        <text x="563" y={y + 13} textAnchor="end" fontSize="35" fontWeight="300" fill={MUTED}>{label}</text>
        <line x1="601" x2="2378" y1={y} y2={y} stroke="#474c4e" strokeWidth="3" />
      </g>
    ))}
    <polygon points={`${toPts(upper)} 2340,2110 601,2110`} fill="url(#gArea)" />
    <polyline points={toPts(upper)} fill="none" stroke={GREEN} strokeWidth="3" />
    <polyline points={toPts(lower)} fill="none" stroke={RED} strokeWidth="3" strokeDasharray="16 13" />
    {barData.map(([x, y]) => <rect key={x} x={x - 14} y={y} width="28" height={2140 - y} rx="14" fill="url(#gBar)" />)}
  </svg>
);

const App = () => (
  <Screen>
    <GlobalStyle />
    <Defs />
    <MenuBar>
      <FaApple size={30} color="#111" />
      <MenuItems>
        <MenuApp>Chrome</MenuApp>
        {['File', 'Edit', 'View', 'History', 'Bookmarks', 'Profiles', 'Tab', 'Window', 'Help'].map((m) => <span key={m}>{m}</span>)}
      </MenuItems>
      <StatusIcons>
        <ApplePlay />
        <Badge233 />
        <MiniCone />
        <Battery />
        <Wifi size={34} strokeWidth={3} color="#222" />
        <Search size={30} strokeWidth={2.6} color="#222" />
        <Control />
        <Siri />
        <Clock>Tue 23 Jul&nbsp; 3:50PM</Clock>
      </StatusIcons>
    </MenuBar>

    <Win>
      <TabStrip>
        <Lights>
          <Light $c="#ff5f57" />
          <Light $c="#febc2e" />
          <Light $c="#28c840" />
        </Lights>
        {tabs.map((t, i) => (
          <React.Fragment key={t.title}>
            <Tab $active={t.active}>
              {t.fav}
              <TabTitle>{t.title}</TabTitle>
              <X size={24} strokeWidth={2} />
            </Tab>
            <TabSep $off={i === 1 || i === 2} />
          </React.Fragment>
        ))}
        <NewTab><Plus size={32} strokeWidth={2} /></NewTab>
        <TabMenu><ChevronDown size={26} strokeWidth={2.5} color="#222" /></TabMenu>
      </TabStrip>

      <Toolbar>
        <NavBtns>
          <ArrowLeft size={40} strokeWidth={1.7} />
          <ArrowRight size={40} strokeWidth={1.7} color="#a8a8a8" />
          <RotateCw size={34} strokeWidth={1.9} />
        </NavBtns>
        <Address>
          <SiteChip><SiteTune /></SiteChip>
          <Url>blockpay-1.onrender.com/hr-dashboard</Url>
          <AddrActions>
            <PassKey />
            <EyeOff size={36} strokeWidth={1.8} />
            <Star size={36} strokeWidth={1.8} />
          </AddrActions>
        </Address>
        <Exts>
          <BugExt />
          <FlameExt />
          <PillExt />
          <FoxExt />
          <SExt />
          <ExtPuzzle />
          <ToolSep $ml={-2} />
        </Exts>
        <ToolEnd $ml={35}><Download size={36} strokeWidth={1.9} /></ToolEnd>
        <ToolEnd $ml={35}><Avatar>S</Avatar></ToolEnd>
        <ToolEnd $ml={32}><EllipsisVertical size={36} strokeWidth={2.2} /></ToolEnd>
      </Toolbar>

      <Bookmarks>
        {marks.map((m, i) => (
          <Mark key={`${m.t}${i}`} $w={m.w}>
            {m.i}
            <span>{m.t}</span>
          </Mark>
        ))}
        <AllMarks>
          <MarkSep />
          <Folder size={32} strokeWidth={1.8} />
          <span>All Bookmarks</span>
        </AllMarks>
      </Bookmarks>

      <Band />
      <Dash>
        <Sidebar>
          <Brand>C2FO</Brand>
          {nav.map(([label, icon], i) => (
            <NavRow key={label} $active={i === 0}>
              <NavIcon $active={i === 0}>{sideIcons[icon]}</NavIcon>
              {label}
            </NavRow>
          ))}
          <SideLabel>OUR FEATURES</SideLabel>
          {features.map(([label, icon]) => (
            <NavRow key={label}>
              <NavIcon>{sideIcons[icon]}</NavIcon>
              {label}
              <Diamond />
            </NavRow>
          ))}
          <SideBar2 />
        </Sidebar>

        <Main>
          <Header>
            <Logo>BlockPay</Logo>
            <HeadActions>
              <Settings size={48} strokeWidth={1.2} />
              <Bell size={48} strokeWidth={1.2} />
              <LogoutBtn>Logout</LogoutBtn>
            </HeadActions>
            <UserBox>hr<br />info@gmail.com</UserBox>
          </Header>
          <TitleBar>
            <PageTitle>Dashboard</PageTitle>
            <Crumb>Home / Dashboard</Crumb>
          </TitleBar>

          <TopRow>
            <Card>
              <DepositHead>
                <CardTitle>Total number of Deposits</CardTitle>
                <StatRow>
                  <BigValue>15</BigValue>
                  <IconTile $size={64}>
                    <svg viewBox="0 0 24 24" width="34" height="34" fill="none" stroke="currentColor" strokeWidth="1.5">
                      <rect x="4" y="4" width="16" height="18" rx="2" />
                      <path d="M8 2v4M12 2v4M16 2v4M7 11l1.2 1.2L10 10M7 16.5l1.2 1.2 1.8-2.2M13 11.5h4M13 17h4" />
                    </svg>
                  </IconTile>
                </StatRow>
              </DepositHead>
              <Bars>
                <BarLabel $mt={64} $pl={4} $pr={15}><span>Employees paid</span><span>15/28</span></BarLabel>
                <Track $h={15} $mt={46}><Fill style={{ width: '64.6%' }} /></Track>
                <BarLabel $mt={63} $pl={0} $pr={29}><span>Employees remaining</span><span>13/28</span></BarLabel>
                <Track $h={12} $mt={45} $cut><Fill style={{ width: '42.4%' }} /></Track>
              </Bars>
            </Card>

            <Card>
              <StatsTitle>Amount statistics</StatsTitle>
              <StatsBody>
                <Donut>
                  <DonutChart />
                  <DonutText>
                    <DonutNum>28</DonutNum>
                    <DonutSub>Total employees</DonutSub>
                  </DonutText>
                </Donut>
                <Legend>
                  <LegendItem><Swatch $size={22} $c={BLUE} />Payment successful</LegendItem>
                  <LegendItem><Swatch $size={22} $c={GREEN} />Payment in-progress</LegendItem>
                  <LegendItem><Swatch $size={22} $c={RED} />Payment denied</LegendItem>
                  <LegendItem><Swatch $size={22} $c={ORANGE} />Payment pending</LegendItem>
                </Legend>
              </StatsBody>
            </Card>

            <Card>
              <DepositTop>
                <div>
                  <CardTitle>This month Deposit</CardTitle>
                  <DepositValue>0.00002 ether</DepositValue>
                </div>
                <TileWrap>
                  <IconTile $size={80}><DollarSign size={50} strokeWidth={2.6} /></IconTile>
                </TileWrap>
              </DepositTop>
              <SparkBox><SparkChart /></SparkBox>
            </Card>
          </TopRow>

          <BottomRow>
            <Card>
              <WorkHead>
                <CardTitle>Work Overview</CardTitle>
                <YearBtn>2024</YearBtn>
              </WorkHead>
              <WorkLegend>
                <WorkLegendItem><Swatch $size={30} $c={GREEN} />Upper Median Statistics</WorkLegendItem>
                <WorkLegendItem><Swatch $size={30} $c={RED} />Lower Median Statistics</WorkLegendItem>
              </WorkLegend>
              <ChartBox><WorkChart /></ChartBox>
            </Card>

            <Card>
              <ScheduleTitle>Upcoming Schedules</ScheduleTitle>
              <CalHead>{days.map((d) => <DayName key={d}>{d}</DayName>)}</CalHead>
              <CalGrid>
                {weeks.map((w, r) => w.map((d, c) => (
                  <DayCell key={`${r}-${c}`} $sun={c === 0} $today={r === 1 && c === 1}>
                    {d}
                    {r === 1 && c === 1 && <TodayDot />}
                  </DayCell>
                )))}
              </CalGrid>
            </Card>
          </BottomRow>
        </Main>
      </Dash>
    </Win>

    <Cursor viewBox="0 0 24 34" width="24" height="34">
      <path d="M2 1l0 26 6-6 4 11 5-2-4-11h8z" fill="#111" stroke="#fff" strokeWidth="2" />
    </Cursor>

    <Dock>
      {dockIcons.map((d) => (d.sep ? <DockSep key={d.id} /> : (
        <DockItem key={d.id}>
          {d.node}
          {d.badge && <DockBadge $l={d.badge.l} $w={d.badge.w}>{d.badge.text}</DockBadge>}
          {d.dot && <DockDot />}
        </DockItem>
      )))}
    </Dock>
  </Screen>
);

export default App;
